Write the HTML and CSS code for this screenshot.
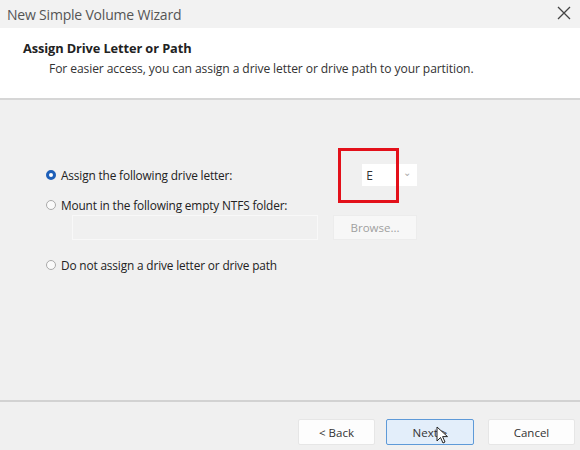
FILE: index.html
```html
<!DOCTYPE html>
<html>
<head>
<meta charset="utf-8">
<link rel="stylesheet" href="styles.css">
</head>
<body>
<div class="window">
  <div class="titlebar">
    <span class="title">New Simple Volume Wizard</span>
    <svg class="close" width="14" height="14" viewBox="0 0 14 14"><path d="M1 1L13 13M13 1L1 13" stroke="#444" stroke-width="1.3" fill="none"/></svg>
  </div>
  <div class="header">
    <div class="heading">Assign Drive Letter or Path</div>
    <div class="subtitle">For easier access, you can assign a drive letter or drive path to your partition.</div>
  </div>
  <div class="body">
    <div class="row row-first">
      <label class="opt"><span class="radio checked"></span>Assign the following drive letter:</label>
      <div class="combo-wrap">
        <div class="combo"><span class="letter">E</span><span class="arrow">&#8964;</span></div>
        <div class="highlight"></div>
      </div>
    </div>
    <label class="opt opt2"><span class="radio"></span>Mount in the following empty NTFS folder:</label>
    <div class="folder-row">
      <div class="textbox"></div>
      <div class="browse">Browse...</div>
    </div>
    <label class="opt opt3"><span class="radio"></span>Do not assign a drive letter or drive path</label>
  </div>
  <div class="footer">
    <div class="btn">&lt; Back</div>
    <div class="btn next">Next &gt;
      <svg class="cursor" width="14" height="20" viewBox="0 0 14 20"><path d="M1 1L1 15L4.5 11.5L7 17L9 16L6.6 10.6L11.5 10.6Z" fill="#fff" stroke="#222" stroke-width="1"/></svg>
    </div>
    <div class="btn cancel">Cancel</div>
  </div>
</div>
</body>
</html>
```

FILE: styles.css
```css
* { box-sizing: border-box; }
html, body { margin: 0; padding: 0; }
body {
  width: 580px;
  height: 450px;
  overflow: hidden;
  font-family: "Open Sans", "Liberation Sans", sans-serif;
  color: #1e1e1e;
  background: #f0f0f0;
}
.window { width: 580px; height: 450px; display: flex; flex-direction: column; }
.titlebar {
  height: 28px;
  background: #f2f2f2;
  display: flex;
  align-items: center;
  justify-content: space-between;
  padding: 0 9px 0 7px;
}
.title { font-size: 14px; color: #555; letter-spacing: -0.2px; }
.close { margin-top: -2px; }
.header {
  height: 72px;
  background: #fff;
  border-bottom: 2px solid #d6d6d6;
  padding: 11px 0 0 23px;
}
.heading { font-size: 12.8px; font-weight: 700; color: #222; letter-spacing: -0.1px; }
.subtitle { font-size: 12.1px; color: #333; margin: 3px 0 0 26px; letter-spacing: -0.1px; }
.body {
  flex: 1;
  padding: 64px 0 0 46px;
  border-bottom: 2px solid #d2d2d2;
}
.row { display: flex; align-items: center; }
.opt {
  display: flex;
  align-items: center;
  font-size: 11.85px;
  color: #222;
  letter-spacing: -0.15px;
  height: 16px;
}
.radio {
  width: 10px;
  height: 10px;
  border-radius: 50%;
  border: 1px solid #aaa;
  background: #fafafa;
  margin-right: 5px;
  flex: none;
}
.radio.checked { border: 3px solid #1d5fb8; background: #fff; }
.combo-wrap { position: relative; margin-left: 130px; }
.combo {
  width: 55px;
  height: 22px;
  background: #fff;
  display: flex;
  align-items: center;
  justify-content: space-between;
  padding: 0 6px 0 4px;
}
.letter { font-size: 12px; color: #333; }
.arrow { font-size: 10px; color: #aaa; margin-top: -6px; }
.highlight {
  position: absolute;
  left: -24px;
  top: -16px;
  width: 61px;
  height: 55px;
  border: 3px solid #e3101a;
}
.opt2 { margin-top: 11px; }
.folder-row { display: flex; margin: 2px 0 0 26px; gap: 15px; }
.textbox {
  width: 246px;
  height: 25px;
  border: 1px solid #f8f8f8;
  background: #f0f0f0;
}
.browse {
  width: 84px;
  height: 25px;
  background: #f7f7f7;
  border: 1px solid #ececec;
  color: #a0a0a0;
  font-size: 11.5px;
  display: flex;
  align-items: center;
  justify-content: center;
}
.opt3 { margin-top: 17px; }
.footer {
  height: 48px;
  display: flex;
  align-items: flex-start;
  padding: 17px 0 0 298px;
  gap: 11px;
}
.btn {
  position: relative;
  width: 77px;
  height: 26px;
  background: #fdfdfd;
  border: 1px solid #e6e6e6;
  border-radius: 2px;
  font-size: 11.5px;
  color: #333;
  display: flex;
  align-items: center;
  justify-content: center;
}
.btn.next {
  width: 88px;
  background: #e3eefa;
  border: 1px solid #5e9ad8;
}
.btn.cancel { width: 87px; margin-left: 3px; }
.cursor { position: absolute; left: 49px; top: 6px; }
```
